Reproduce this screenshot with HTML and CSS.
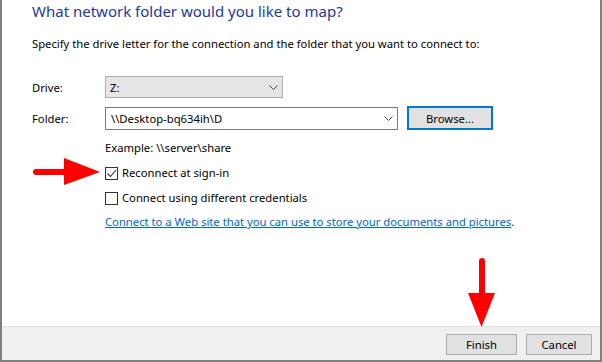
FILE: index.html
```html
<!DOCTYPE html>
<html lang="en">
<head>
    <meta charset="UTF-8">
    <title>Map Network Drive</title>
    <link rel="stylesheet" href="styles.css">
</head>
<body>
    <div class="dialog">
        <div class="content">
            <h1 class="instruction">What network folder would you like to map?</h1>
            <p class="intro">Specify the drive letter for the connection and the folder that you want to connect to:</p>

            <div class="field-row drive-row">
                <span class="field-label">Drive:</span>
                <div class="select">
                    <span>Z:</span>
                    <svg class="chevron" width="9" height="5" viewBox="0 0 9 5"><polyline points="0.5,0.5 4.5,4.5 8.5,0.5" fill="none" stroke="#444" stroke-width="1"/></svg>
                </div>
            </div>

            <div class="field-row folder-row">
                <span class="field-label">Folder:</span>
                <div class="combo">
                    <span>\\Desktop-bq634ih\D</span>
                    <svg class="chevron" width="9" height="5" viewBox="0 0 9 5"><polyline points="0.5,0.5 4.5,4.5 8.5,0.5" fill="none" stroke="#444" stroke-width="1"/></svg>
                </div>
                <button class="btn btn-default">Browse...</button>
            </div>

            <div class="options">
                <p class="example">Example: \\server\share</p>
                <label class="check">
                    <span class="box">
                        <svg width="11" height="11" viewBox="0 0 11 11"><polyline points="1.5,5.5 4.5,8.5 10,2" fill="none" stroke="#333" stroke-width="1.1"/></svg>
                    </span>
                    Reconnect at sign-in
                </label>
                <label class="check">
                    <span class="box"></span>
                    Connect using different credentials
                </label>
                <p class="link-line"><a href="#">Connect to a Web site that you can use to store your documents and pictures</a>.</p>
            </div>

            <svg class="arrow arrow-right" width="72" height="30" viewBox="0 0 72 30">
                <line x1="4" y1="15" x2="40" y2="15" stroke="#ff0000" stroke-width="6" stroke-linecap="round"/>
                <polygon points="32,1 68,15 32,28" fill="#ff0000"/>
            </svg>
            <svg class="arrow arrow-down" width="30" height="72" viewBox="0 0 30 72">
                <line x1="15" y1="4" x2="15" y2="40" stroke="#ff0000" stroke-width="6" stroke-linecap="round"/>
                <polygon points="1,36 28,36 14.5,70" fill="#ff0000"/>
            </svg>
        </div>

        <div class="footer">
            <button class="btn">Finish</button>
            <button class="btn">Cancel</button>
        </div>
    </div>
</body>
</html>
```

FILE: styles.css
```css
* {
    box-sizing: border-box;
    margin: 0;
    padding: 0;
}

body {
    font-family: 'Noto Sans', 'Liberation Sans', sans-serif;
    font-size: 11.25px;
    color: #000;
    background-color: #fff;
}

.dialog {
    width: 602px;
    height: 362px;
    border: 2px solid #7f7f7f;
    border-top: none;
    display: flex;
    flex-direction: column;
}

.content {
    position: relative;
    flex: 1;
    padding-left: 30px;
}

.instruction {
    font-size: 15px;
    font-weight: normal;
    color: #1c3a99;
    line-height: 20px;
    margin-top: 1px;
}

.intro {
    line-height: 16px;
    margin-top: 15px;
}

.field-row {
    display: flex;
    align-items: center;
}

.field-label {
    width: 73px;
}

.drive-row {
    margin-top: 24px;
}

.folder-row {
    margin-top: 8px;
}

.select {
    width: 178px;
    height: 22px;
    background-color: #e5e5e5;
    border: 1px solid #adadad;
    display: flex;
    align-items: center;
    justify-content: space-between;
    padding: 0 4px 0 4px;
}

.combo {
    width: 293px;
    height: 23px;
    background-color: #fff;
    border: 1px solid #7a7a7a;
    display: flex;
    align-items: center;
    justify-content: space-between;
    padding: 0 4px 0 5px;
}

.btn {
    font-family: inherit;
    font-size: 11.25px;
    color: #000;
    background-color: #e1e1e1;
    border: 1px solid #adadad;
    height: 21px;
    width: 70px;
}

.btn-default {
    margin-left: 9px;
    width: 86px;
    height: 24px;
    border: 2px solid #0078d7;
}

.options {
    padding-left: 73px;
}

.example {
    line-height: 16px;
    margin-top: 10px;
}

.check {
    display: flex;
    align-items: center;
    gap: 4px;
    line-height: 16px;
    margin-top: 9px;
}

.box {
    width: 13px;
    height: 13px;
    border: 1px solid #333;
    background-color: #fff;
    display: flex;
    align-items: center;
    justify-content: center;
}

.box svg {
    display: block;
}

.link-line {
    line-height: 16px;
    margin-top: 8px;
}

.link-line a {
    color: #0066cc;
}

.arrow {
    position: absolute;
}

.arrow-right {
    left: 30px;
    top: 157px;
}

.arrow-down {
    left: 465px;
    top: 257px;
}

.footer {
    height: 34px;
    background-color: #f0f0f0;
    border-top: 1px solid #dfdfdf;
    display: flex;
    justify-content: flex-end;
    align-items: center;
    gap: 9px;
    padding-right: 8px;
    padding-top: 1px;
}

.footer .btn {
    width: 71px;
    height: 21px;
}

.footer .btn + .btn {
    width: 66px;
}
```
